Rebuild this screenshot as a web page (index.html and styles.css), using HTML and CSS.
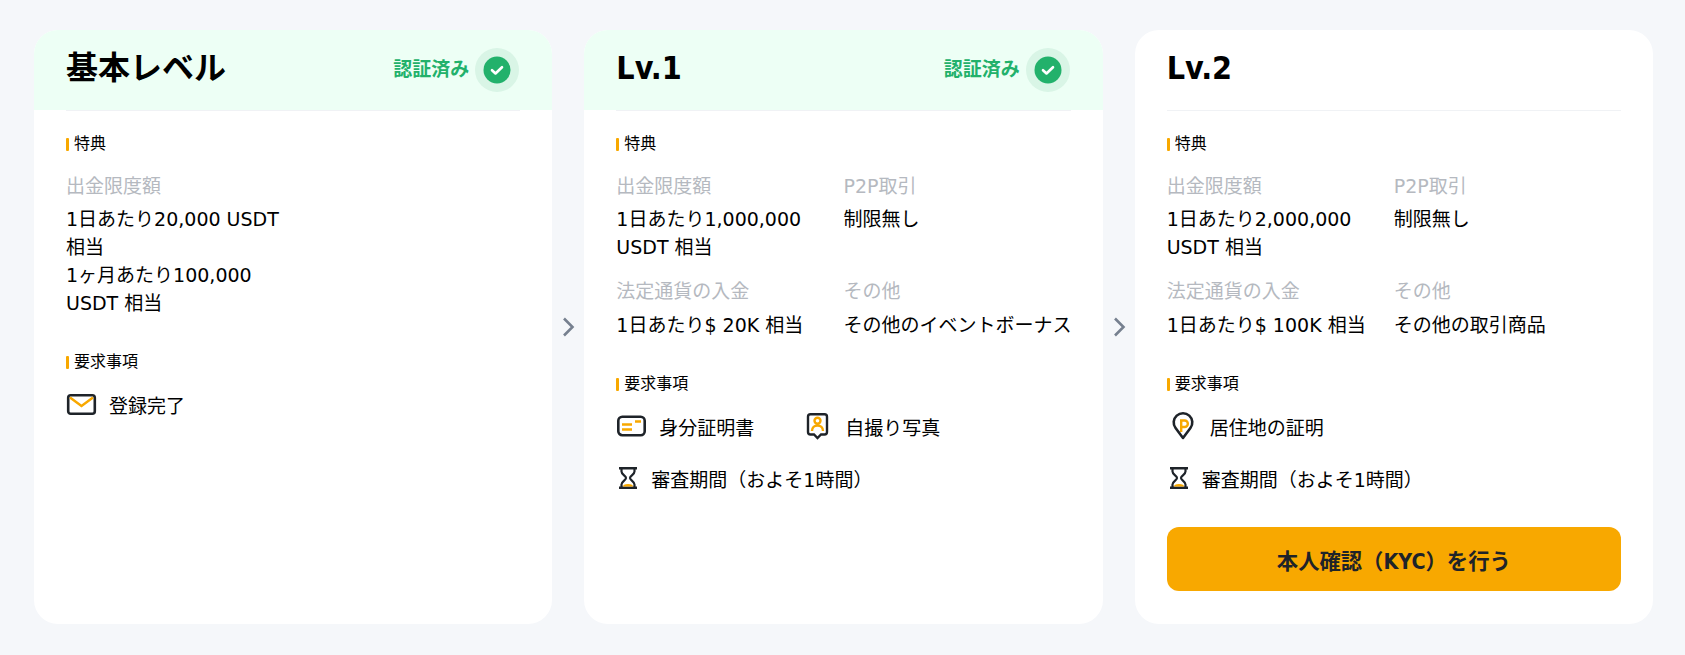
FILE: index.html
```html
<!DOCTYPE html>
<html lang="ja">
<head>
    <meta charset="UTF-8">
    <meta name="viewport" content="width=device-width, initial-scale=1.0">
    <title>本人確認レベル</title>
    <link rel="stylesheet" href="styles.css">
</head>
<body>
    <div class="levels">
        <div class="card">
            <div class="card-head done">
                <h2 class="title">基本レベル</h2>
                <div class="status">
                    <span class="status-text">認証済み</span>
                    <span class="check-ring">
                        <svg width="28" height="28" viewBox="0 0 28 28"><circle cx="14" cy="14" r="13.500" fill="#22b16b"/><path d="M9 14.200l3.500 3.300 6.500-6.300" fill="none" stroke="#fff" stroke-width="2.600" stroke-linecap="round" stroke-linejoin="round"/></svg>
                    </span>
                </div>
            </div>
            <div class="card-body">
                <div class="section-title">特典</div>
                <div class="perks">
                    <div class="perk">
                        <div class="perk-label">出金限度額</div>
                        <div class="perk-value">1日あたり20,000 USDT 相当<br>1ヶ月あたり100,000 USDT 相当</div>
                    </div>
                </div>
                <div class="section-title">要求事項</div>
                <div class="reqs">
                    <div class="req">
                        <svg class="icon" width="32" height="24" viewBox="0 0 32 24"><rect x="2.200" y="3.200" width="26.600" height="18.600" rx="2.500" fill="none" stroke="#1e2329" stroke-width="2.600"/><path d="M4 5.500l11.500 8.500L27 5.500" fill="none" stroke="#f8a800" stroke-width="2.400"/></svg>
                        <span class="req-text">登録完了</span>
                    </div>
                </div>
            </div>
        </div>

        <div class="arrow">
            <svg width="14" height="22" viewBox="0 0 14 22"><path d="M3 2.500l8.500 8.500-8.500 8.500" fill="none" stroke="#76808f" stroke-width="2.600"/></svg>
        </div>

        <div class="card">
            <div class="card-head done">
                <h2 class="title">Lv.1</h2>
                <div class="status">
                    <span class="status-text">認証済み</span>
                    <span class="check-ring">
                        <svg width="28" height="28" viewBox="0 0 28 28"><circle cx="14" cy="14" r="13.500" fill="#22b16b"/><path d="M9 14.200l3.500 3.300 6.500-6.300" fill="none" stroke="#fff" stroke-width="2.600" stroke-linecap="round" stroke-linejoin="round"/></svg>
                    </span>
                </div>
            </div>
            <div class="card-body">
                <div class="section-title">特典</div>
                <div class="perks">
                    <div class="perk">
                        <div class="perk-label">出金限度額</div>
                        <div class="perk-value">1日あたり1,000,000 USDT 相当</div>
                    </div>
                    <div class="perk">
                        <div class="perk-label">P2P取引</div>
                        <div class="perk-value">制限無し</div>
                    </div>
                    <div class="perk">
                        <div class="perk-label">法定通貨の入金</div>
                        <div class="perk-value">1日あたり$ 20K 相当</div>
                    </div>
                    <div class="perk">
                        <div class="perk-label">その他</div>
                        <div class="perk-value">その他のイベントボーナス</div>
                    </div>
                </div>
                <div class="section-title">要求事項</div>
                <div class="reqs">
                    <div class="req">
                        <svg class="icon" width="32" height="24" viewBox="0 0 32 24"><rect x="2.300" y="2.800" width="26.400" height="18.400" rx="4" fill="none" stroke="#1e2329" stroke-width="2.600"/><path d="M6 10.500h10M6 15.500h10M19 7.500h6" fill="none" stroke="#f8a800" stroke-width="2.400"/></svg>
                        <span class="req-text">身分証明書</span>
                    </div>
                    <div class="req">
                        <svg class="icon" width="32" height="28" viewBox="0 0 32 28"><path d="M8.500 2.200h14a2.500 2.500 0 0 1 2.500 2.500v15.300a2.500 2.500 0 0 1-2.500 2.500h-3.500l-3.500 3.500-3.500-3.500H8.500A2.500 2.500 0 0 1 6 20V4.700a2.500 2.500 0 0 1 2.500-2.500z" fill="none" stroke="#1e2329" stroke-width="2.400"/><circle cx="15.500" cy="8.800" r="3" fill="none" stroke="#f8a800" stroke-width="2.400"/><path d="M10 19c0-3.500 2.500-5.500 5.500-5.500s5.500 2 5.500 5.500" fill="none" stroke="#f8a800" stroke-width="2.400"/></svg>
                        <span class="req-text">自撮り写真</span>
                    </div>
                    <div class="req wide">
                        <svg class="icon-time" width="20" height="22" viewBox="0 0 20 22"><path d="M1 1.200h18M1 20.800h18" stroke="#1e2329" stroke-width="2.400"/><path d="M3.500 1.500v3c0 3 4.500 4.500 4.500 6.500s-4.500 3.500-4.500 6.500v3M16.500 1.500v3c0 3-4.500 4.500-4.500 6.500s4.500 3.500 4.500 6.500v3" fill="none" stroke="#1e2329" stroke-width="2.200"/><path d="M5 19.500c0-1.600 1.500-2.600 5-2.600s5 1 5 2.600z" fill="#f8a800"/></svg>
                        <span class="req-text">審査期間（およそ1時間）</span>
                    </div>
                </div>
            </div>
        </div>

        <div class="arrow">
            <svg width="14" height="22" viewBox="0 0 14 22"><path d="M3 2.500l8.500 8.500-8.500 8.500" fill="none" stroke="#76808f" stroke-width="2.600"/></svg>
        </div>

        <div class="card">
            <div class="card-head">
                <h2 class="title">Lv.2</h2>
            </div>
            <div class="card-body">
                <div class="section-title">特典</div>
                <div class="perks">
                    <div class="perk">
                        <div class="perk-label">出金限度額</div>
                        <div class="perk-value">1日あたり2,000,000 USDT 相当</div>
                    </div>
                    <div class="perk">
                        <div class="perk-label">P2P取引</div>
                        <div class="perk-value">制限無し</div>
                    </div>
                    <div class="perk">
                        <div class="perk-label">法定通貨の入金</div>
                        <div class="perk-value">1日あたり$ 100K 相当</div>
                    </div>
                    <div class="perk">
                        <div class="perk-label">その他</div>
                        <div class="perk-value">その他の取引商品</div>
                    </div>
                </div>
                <div class="section-title">要求事項</div>
                <div class="reqs">
                    <div class="req wide">
                        <svg class="icon" width="32" height="30" viewBox="0 0 32 30"><path d="M16 27L8.570 17.080a9.300 9.300 0 1 1 14.860 0z" fill="none" stroke="#1e2329" stroke-width="2.600" stroke-linejoin="round"/><path d="M14.200 21V9.500h3.400a2.900 2.900 0 0 1 0 6.500h-3.400" fill="none" stroke="#f8a800" stroke-width="2.400"/></svg>
                        <span class="req-text">居住地の証明</span>
                    </div>
                    <div class="req wide">
                        <svg class="icon-time" width="20" height="22" viewBox="0 0 20 22"><path d="M1 1.200h18M1 20.800h18" stroke="#1e2329" stroke-width="2.400"/><path d="M3.500 1.500v3c0 3 4.500 4.500 4.500 6.500s-4.500 3.500-4.500 6.500v3M16.500 1.500v3c0 3-4.500 4.500-4.500 6.500s4.500 3.500 4.500 6.500v3" fill="none" stroke="#1e2329" stroke-width="2.200"/><path d="M5 19.500c0-1.600 1.500-2.600 5-2.600s5 1 5 2.600z" fill="#f8a800"/></svg>
                        <span class="req-text">審査期間（およそ1時間）</span>
                    </div>
                </div>
                <button class="kyc-btn">本人確認（KYC）を行う</button>
            </div>
        </div>
    </div>
</body>
</html>
```

FILE: styles.css
```css
body {
    margin: 0;
    background: #f5f7fa;
    font-family: "DejaVu Sans", "Noto Sans CJK JP", sans-serif;
    color: #000;
}
.levels {
    display: flex;
    padding: 30px 32px 31px 34px;
}
.card {
    flex: 1 1 0;
    min-width: 0;
    height: 594px;
    background: #fff;
    border-radius: 24px;
    overflow: hidden;
    display: flex;
    flex-direction: column;
}
.arrow {
    flex: none;
    width: 32px;
    display: flex;
    align-items: center;
    justify-content: center;
}
.card-head {
    flex: none;
    height: 80px;
    padding: 0 32px;
    display: flex;
    align-items: center;
    justify-content: space-between;
    position: relative;
}
.card-head::after {
    content: "";
    position: absolute;
    left: 32px;
    right: 32px;
    bottom: -1px;
    height: 1px;
    background: #f0f2f5;
}
.card-head.done {
    background: #edfff5;
}
.title {
    margin: 0;
    font-family: "DejaVu Sans Condensed", "Noto Sans CJK JP", sans-serif;
    font-size: 32px;
    line-height: 44px;
    font-weight: 700;
    position: relative;
    top: -2px;
}
.status {
    display: flex;
    align-items: center;
    gap: 6px;
    color: #22b16b;
    font-size: 19px;
    font-weight: 700;
    margin-right: 1px;
}
.status-text {
    position: relative;
    top: -3px;
}
.check-ring {
    width: 44px;
    height: 44px;
    border-radius: 50%;
    background: #d9f5e6;
    display: flex;
    align-items: center;
    justify-content: center;
}
.card-body {
    flex: 1;
    padding: 23px 32px 33px;
    display: flex;
    flex-direction: column;
}
.section-title {
    font-size: 16px;
    line-height: 22px;
    padding-left: 8px;
    position: relative;
}
.section-title::before {
    content: "";
    position: absolute;
    left: 0;
    top: 5px;
    width: 3px;
    height: 13px;
    background: #f8a800;
    border-radius: 1px;
}
.perks {
    display: grid;
    grid-template-columns: 1fr 1fr;
    row-gap: 16px;
    margin: 17px 0 34px;
}
.perk:nth-child(even) {
    margin-right: -6px;
}
.perk-label {
    font-size: 19px;
    line-height: 28px;
    color: #b5b9c0;
    margin-bottom: 5px;
}
.perk:nth-child(n+3) .perk-label {
    margin-bottom: 6px;
}
.perk-value {
    font-size: 19px;
    line-height: 28px;
}
.reqs {
    display: flex;
    flex-wrap: wrap;
    margin-top: 16px;
    row-gap: 22px;
}
.req {
    display: flex;
    align-items: center;
    width: 186px;
    height: 30px;
    font-size: 19px;
}
.req.wide {
    width: 100%;
}
.icon {
    margin-right: 11px;
    flex: none;
}
.icon-time {
    margin-left: 2px;
    margin-right: 13px;
    flex: none;
}
.kyc-btn {
    margin-top: auto;
    height: 64px;
    border: none;
    border-radius: 12px;
    background: #f8a800;
    color: #1e2329;
    font-family: "DejaVu Sans Condensed", "Noto Sans CJK JP", sans-serif;
    font-size: 21.33px;
    font-weight: 700;
}
```
